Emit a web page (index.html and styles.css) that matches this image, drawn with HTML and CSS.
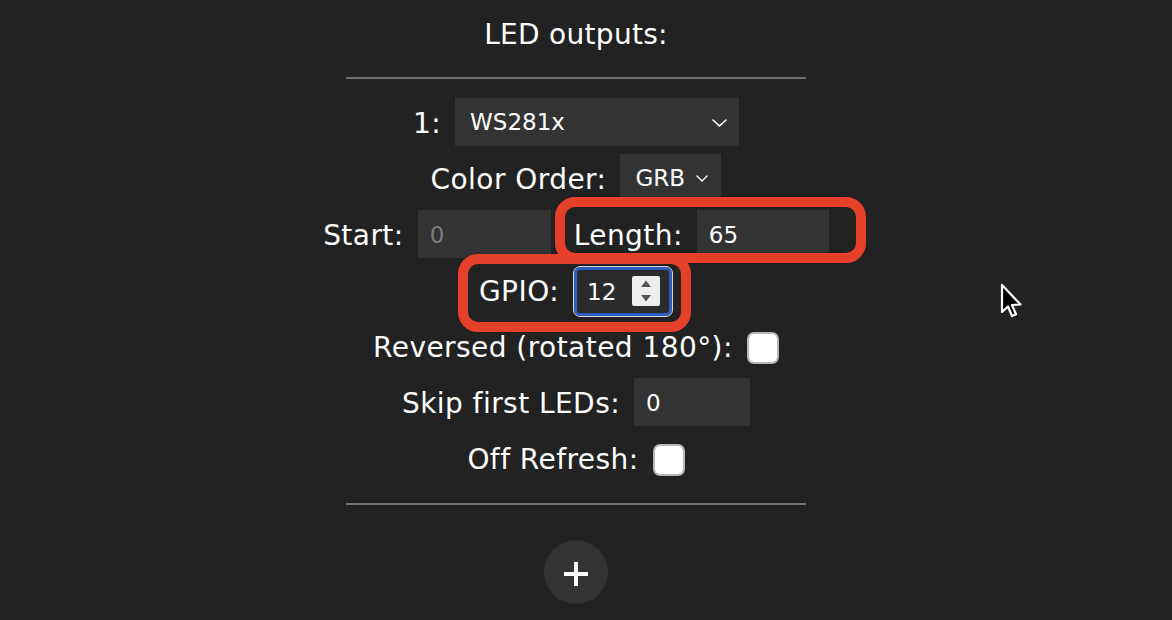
FILE: index.html
```html
<!DOCTYPE html>
<html lang="en">
<head>
<meta charset="utf-8">
<title>LED outputs</title>
<link rel="stylesheet" href="styles.css">
</head>
<body>
<main class="page">
  <h3 class="title">LED outputs:</h3>
  <hr class="rule">
  <div class="rows">
    <div class="row">
      <span class="label">1:</span>
      <span class="sel sel-type">
        <select class="select"><option>WS281x</option></select>
        <svg class="chev chev-lg" viewBox="0 0 15 8" width="15" height="8"><path d="M1 1 L7.5 7 L14 1" fill="none" stroke="#fff" stroke-width="1.6" stroke-linecap="round" stroke-linejoin="round"/></svg>
      </span>
    </div>
    <div class="row">
      <span class="label">Color Order:</span>
      <span class="sel sel-order">
        <select class="select"><option>GRB</option></select>
        <svg class="chev chev-sm" viewBox="0 0 12 7" width="12" height="7"><path d="M1 1 L6 6 L11 1" fill="none" stroke="#fff" stroke-width="1.4" stroke-linecap="round" stroke-linejoin="round"/></svg>
      </span>
    </div>
    <div class="row">
      <span class="label">Start:</span>
      <input class="field field-start" type="text" value="0" disabled>
      <span class="mark mark-length">
        <span class="label">Length:</span>
        <input class="field field-length" type="text" value="65">
      </span>
    </div>
    <div class="row">
      <span class="mark mark-gpio">
        <span class="label">GPIO:</span>
        <span class="num">
          <input class="num-input" type="text" value="12">
          <span class="spin">
            <svg viewBox="0 0 28 30" width="28" height="30"><path d="M9 11 L14 4.5 L19 11 Z" fill="#555"/><path d="M9 19 L14 25.5 L19 19 Z" fill="#555"/></svg>
          </span>
        </span>
      </span>
    </div>
    <div class="row">
      <span class="label">Reversed (rotated 180°):</span>
      <input class="check" type="checkbox">
    </div>
    <div class="row">
      <span class="label">Skip first LEDs:</span>
      <input class="field field-skip" type="text" value="0">
    </div>
    <div class="row">
      <span class="label">Off Refresh:</span>
      <input class="check" type="checkbox">
    </div>
  </div>
  <hr class="rule rule-bottom">
  <button class="add" type="button" aria-label="Add output">
    <svg viewBox="0 0 24 24" width="24" height="24"><rect x="0" y="10" width="24" height="4" fill="#fff"/><rect x="10" y="0" width="4" height="24" fill="#fff"/></svg>
  </button>
</main>
<svg class="cursor" viewBox="0 0 26 38" width="26" height="38"><path d="M3 2 L3 29 L9 23.5 L13 33 L17 31.3 L13 22 L21.5 21.5 Z" fill="#000" stroke="#fff" stroke-width="2.2" stroke-linejoin="round"/></svg>
</body>
</html>
```

FILE: styles.css
```css
html, body {
  margin: 0;
  padding: 0;
}

body {
  background: #222222;
  color: #ffffff;
  font-family: "DejaVu Sans", Verdana, sans-serif;
  font-size: 28px;
  line-height: 56px;
  width: 1172px;
  height: 620px;
  overflow: hidden;
  position: relative;
}

.page {
  width: 1152px;
  display: flex;
  flex-direction: column;
  align-items: center;
}

.title {
  margin: 7px 0 0;
  height: 56px;
  font-size: 28px;
  font-weight: normal;
  line-height: 56px;
  letter-spacing: 0.3px;
}

.rule {
  width: 460px;
  height: 0;
  border: none;
  border-top: 2px solid #707070;
  margin: 14px 0 0;
}

.rule-bottom {
  margin-top: 17px;
}

.rows {
  margin-top: 15px;
  display: flex;
  flex-direction: column;
  align-items: center;
}

.row {
  height: 56px;
  display: flex;
  align-items: center;
  justify-content: center;
  gap: 14px;
  white-space: nowrap;
}

.label {
  box-sizing: border-box;
  height: 56px;
  padding-top: 3px;
  line-height: 53px;
  letter-spacing: 0.45px;
}

.sel {
  position: relative;
  display: block;
  height: 48px;
}

.select {
  -webkit-appearance: none;
  appearance: none;
  display: block;
  height: 48px;
  margin: 0;
  border: none;
  border-radius: 0;
  background: #333333;
  color: #ffffff;
  font-family: "DejaVu Sans", Verdana, sans-serif;
  font-size: 23px;
  padding: 0 0 0 15px;
  outline: none;
}

.sel-type .select {
  width: 284px;
}

.sel-order .select {
  width: 101px;
}

.chev {
  position: absolute;
  top: 50%;
  pointer-events: none;
}

.chev-lg {
  right: 12px;
  margin-top: -3px;
}

.chev-sm {
  right: 13px;
  margin-top: -3px;
}

.field {
  box-sizing: border-box;
  height: 48px;
  margin: 0;
  border: none;
  border-radius: 0;
  background: #333333;
  color: #ffffff;
  font-family: "DejaVu Sans", Verdana, sans-serif;
  font-size: 23px;
  padding: 2px 12px 0;
  outline: none;
}

.field:disabled {
  color: #7b7b7b;
  -webkit-text-fill-color: #7b7b7b;
  opacity: 1;
}

.field-start {
  width: 133px;
}

.field-length {
  width: 132px;
}

.field-skip {
  width: 116px;
}

.mark {
  position: relative;
  display: flex;
  align-items: center;
  gap: 14px;
  align-self: stretch;
}

.mark-length {
  margin-left: 9px;
}

.mark::after {
  content: "";
  position: absolute;
  border: 10px solid #e5402a;
  border-radius: 20px;
  pointer-events: none;
}

.mark-length::after {
  left: -19px;
  right: -37px;
  top: -9px;
  bottom: -1px;
}

.mark-gpio::after {
  left: -21px;
  right: -18px;
  top: -8px;
  bottom: -14px;
}

.num {
  box-sizing: border-box;
  width: 100px;
  height: 51px;
  margin-top: 2px;
  display: flex;
  align-items: center;
  border: 1px solid #d6d6d6;
  border-radius: 7px;
  box-shadow: inset 0 0 0 3px #2d5fc2;
  background: #2b2b2b;
  padding: 0 12px 0 13px;
}

.num-input {
  flex: 1;
  min-width: 0;
  height: 40px;
  margin: 0;
  padding: 2px 0 0;
  border: none;
  background: transparent;
  color: #ffffff;
  font-family: "DejaVu Sans", Verdana, sans-serif;
  font-size: 23px;
  outline: none;
}

.spin {
  display: block;
  width: 28px;
  height: 30px;
  background: #eeeeee;
  border-radius: 2px;
}

.spin svg {
  display: block;
}

.check {
  -webkit-appearance: none;
  appearance: none;
  box-sizing: border-box;
  width: 32px;
  height: 32px;
  margin: 4px 0 0;
  background: #ffffff;
  border: 2px solid #b5b5b5;
  border-radius: 7px;
}

.add {
  margin-top: 35px;
  width: 64px;
  height: 64px;
  border: none;
  border-radius: 50%;
  background: #333333;
  display: flex;
  align-items: center;
  justify-content: center;
  padding: 3px 0 0;
  cursor: pointer;
}

.add svg {
  display: block;
}

.cursor {
  position: absolute;
  left: 999px;
  top: 283px;
}
```
